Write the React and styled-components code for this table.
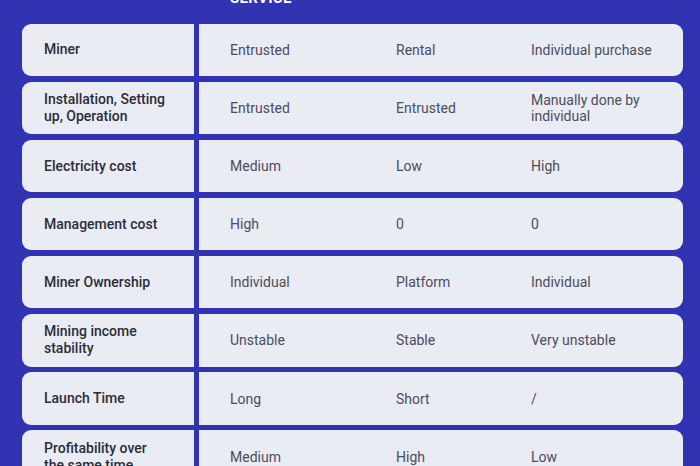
import React from 'react'
import styled, { createGlobalStyle } from 'styled-components'

const GlobalStyle = createGlobalStyle`
html, body {
  margin: 0;
  padding: 0;
  background: #3133b2;
  overflow: hidden;
}
body {
  font-family: Roboto, "Liberation Sans", sans-serif;
}
`

const Page = styled.div`
width: 700px;
height: 466px;
overflow: hidden;
background: #3133b2;
`

const Table = styled.div`
display: flex;
flex-direction: column;
gap: 5.8px;
padding: 0 17px 0 22px;
margin-top: -14px;
`

const HeaderRow = styled.div`
display: grid;
grid-template-columns: 172px 5px 166px 135px 1fr;
height: 32px;
color: #fff;
font-weight: 700;
font-size: 15px;
letter-spacing: 0.3px;
`

const HeaderCell = styled.div`
grid-column: ${p => p.col};
align-self: start;
padding: 3px 0 0 31px;
line-height: 18px;
`

const Row = styled.div`
display: flex;
gap: 5px;
height: 52.3px;
`

const Label = styled.div`
flex: 0 0 172px;
box-sizing: border-box;
display: flex;
align-items: center;
padding: 0 24px 0 22px;
background: #eaecf3;
border-radius: 9px 0 0 9px;
color: #2a2c39;
font-weight: 500;
font-size: 14px;
line-height: 17px;
`

const Values = styled.div`
flex: 1;
display: grid;
grid-template-columns: 166px 135px 1fr;
align-items: center;
padding: 0 22px 0 31px;
background: #eaecf3;
border-radius: 0 9px 9px 0;
`

const Value = styled.div`
color: #4a4d5b;
font-size: 14px;
line-height: 16px;
`

const rows = [
  ['Miner', 'Entrusted', 'Rental', 'Individual purchase'],
  ['Installation, Setting up, Operation', 'Entrusted', 'Entrusted', 'Manually done by individual'],
  ['Electricity cost', 'Medium', 'Low', 'High'],
  ['Management cost', 'High', '0', '0'],
  ['Miner Ownership', 'Individual', 'Platform', 'Individual'],
  ['Mining income stability', 'Unstable', 'Stable', 'Very unstable'],
  ['Launch Time', 'Long', 'Short', '/'],
  ['Profitability over the same time', 'Medium', 'High', 'Low'],
]

export default function App() {
  return (
    <>
      <GlobalStyle />
      <Page>
        <Table>
          <HeaderRow>
            <HeaderCell col={3}>SERVICE</HeaderCell>
          </HeaderRow>
          {rows.map(([label, ...vals]) => (
            <Row key={label}>
              <Label>{label}</Label>
              <Values>
                {vals.map((v, i) => <Value key={i}>{v}</Value>)}
              </Values>
            </Row>
          ))}
        </Table>
      </Page>
    </>
  )
}
